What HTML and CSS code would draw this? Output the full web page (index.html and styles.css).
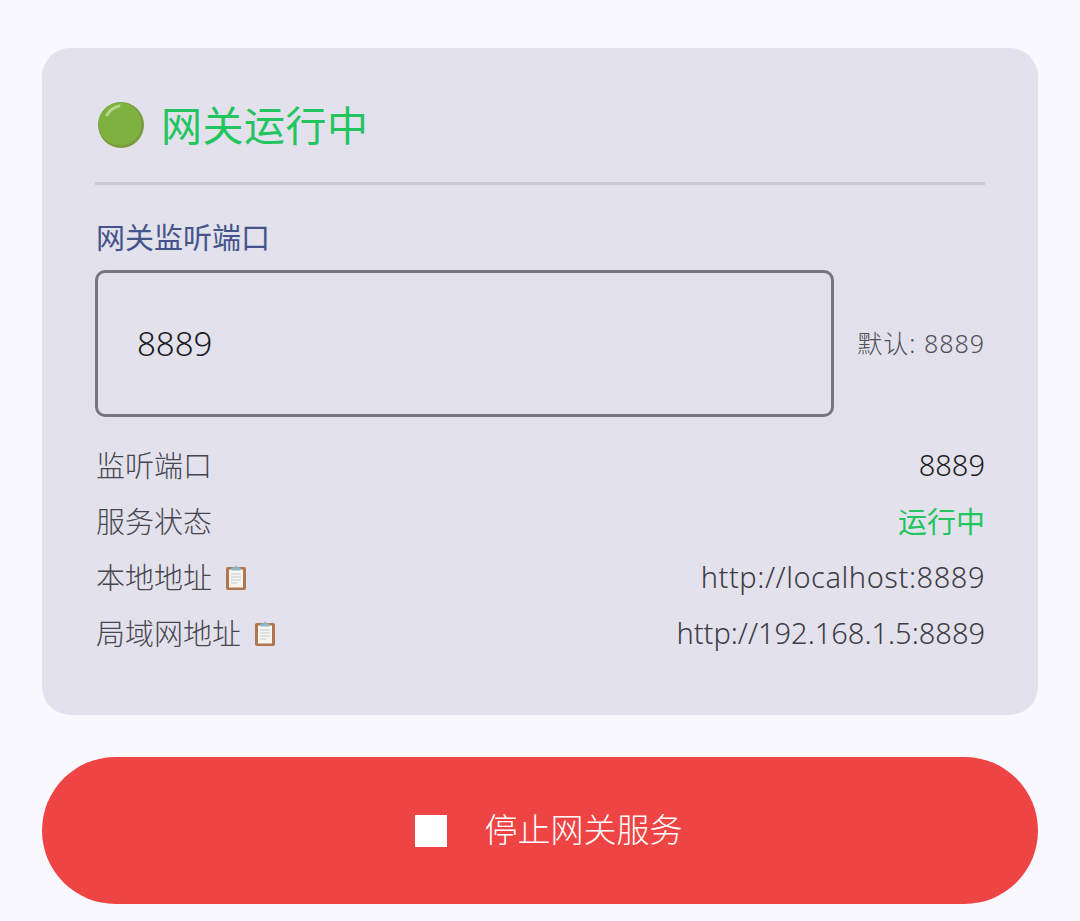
FILE: index.html
```html
<!DOCTYPE html>
<html lang="zh-CN">
<head>
	<meta charset="UTF-8">
	<title>网关</title>
	<link rel="stylesheet" href="styles.css">
</head>
<body>
	<div class="card">
		<header class="status">
			<svg class="dot" viewBox="0 0 50 50">
				<circle cx="25" cy="25" r="23" fill="#7a9a3e"/>
				<circle cx="24" cy="24" r="21.5" fill="#7fb141"/>
				<path d="M11 15 Q15 8 23 6" fill="none" stroke="#b5d68c" stroke-width="3" stroke-linecap="round"/>
			</svg>
			<h1 class="status-text">网关运行中</h1>
		</header>
		<div class="label">网关监听端口</div>
		<div class="port">
			<div class="port-input">8889</div>
			<span class="port-hint">默认: 8889</span>
		</div>
		<ul class="rows">
			<li><span class="key">监听端口</span><span class="val dark">8889</span></li>
			<li><span class="key">服务状态</span><span class="val green">运行中</span></li>
			<li>
				<span class="key">本地地址
					<svg class="clip" viewBox="0 0 20 26">
						<rect x="0" y="3" width="20" height="23" rx="2" fill="#b0764c"/>
						<rect x="3" y="5.500" width="14" height="18" fill="#f6f5f0"/>
						<path d="M5 10H15M5 13H15M5 16H15M5 19H11" stroke="#c3ced6" stroke-width="1"/>
						<path d="M5.500 6.500V3.500H8.500Q10 -0.500 11.500 3.500H14.500V6.500Z" fill="#8db8cc"/>
					</svg>
				</span>
				<span class="val wide">http://localhost:8889</span>
			</li>
			<li>
				<span class="key">局域网地址
					<svg class="clip" viewBox="0 0 20 26">
						<rect x="0" y="3" width="20" height="23" rx="2" fill="#b0764c"/>
						<rect x="3" y="5.500" width="14" height="18" fill="#f6f5f0"/>
						<path d="M5 10H15M5 13H15M5 16H15M5 19H11" stroke="#c3ced6" stroke-width="1"/>
						<path d="M5.500 6.500V3.500H8.500Q10 -0.500 11.500 3.500H14.500V6.500Z" fill="#8db8cc"/>
					</svg>
				</span>
				<span class="val">http://192.168.1.5:8889</span>
			</li>
		</ul>
	</div>
	<button class="stop"><span class="stop-icon"></span><span class="stop-text">停止网关服务</span></button>
</body>
</html>
```

FILE: styles.css
```css
*{
	margin: 0;
	padding: 0;
	list-style: none;
	box-sizing: border-box;
}
html,body{
	width: 100%;
	height: 100%;
	overflow: hidden;
}
body{
	background: #faf8ff;
	padding: 48px 42px 0;
	font-family: "Noto Sans", "Noto Sans CJK SC", sans-serif;
	color: #46464f;
}
.card{
	background: #e3e1ec;
	border-radius: 28px;
	height: 667px;
	padding: 48px 53px 0;
}
.status{
	display: flex;
	align-items: center;
	gap: 15px;
	height: 89px;
	padding-bottom: 28px;
	border-bottom: 3px solid #c8c7d2;
}
.dot{
	width: 50px;
	height: 50px;
	margin-left: 1px;
}
.status-text{
	font-size: 41px;
	font-weight: 400;
	letter-spacing: 0.5px;
	color: #22c55e;
	line-height: 1;
}
.label{
	margin-top: 34px;
	font-size: 29px;
	font-weight: 400;
	line-height: 38px;
	color: #44548a;
	padding-left: 1px;
}
.port{
	display: flex;
	align-items: center;
	justify-content: space-between;
	margin-top: 13px;
}
.port-input{
	width: 739px;
	height: 147px;
	border: 3px solid #777680;
	border-radius: 10px;
	padding-left: 39px;
	display: flex;
	align-items: center;
	font-size: 33px;
	font-weight: 300;
	color: #1b1b21;
}
.port-hint{
	padding-bottom: 4px;
	font-size: 25px;
	font-weight: 300;
	color: #4f4f59;
	letter-spacing: 1px;
}
.rows{
	margin-top: 19px;
	padding-left: 1px;
}
.rows li{
	display: flex;
	justify-content: space-between;
	align-items: center;
	height: 56px;
	font-size: 29px;
	font-weight: 300;
}
.key{
	display: flex;
	align-items: center;
	gap: 14px;
}
.clip{
	width: 20px;
	height: 26px;
	margin-top: 1px;
}
.val{
	color: #3c3c45;
}
.val.dark{
	color: #1b1b21;
}
.val.green{
	color: #22c55e;
	font-weight: 400;
}
.val.wide{
	letter-spacing: 0.55px;
}
.stop{
	display: flex;
	align-items: center;
	justify-content: center;
	gap: 38px;
	width: 100%;
	height: 147px;
	margin-top: 42px;
	padding-left: 17px;
	border: none;
	border-radius: 74px;
	background: #ef4444;
	color: #fff;
	font-family: inherit;
	font-size: 33px;
	font-weight: 300;
}
.stop-icon{
	width: 32px;
	height: 32px;
	background: #fff;
}
.stop-text{
	padding-bottom: 5px;
}
```
